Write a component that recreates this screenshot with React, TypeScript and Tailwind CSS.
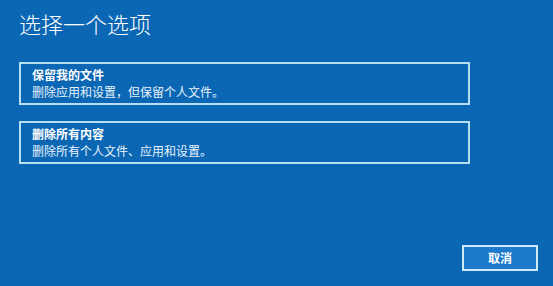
function Option({ title, desc }: { title: string; desc: string }) {
  return (
    <div className="w-[451px] h-[43px] border-2 border-[#b5e0f4] pl-[11px] flex flex-col justify-center">
      <div className="text-[12px] leading-[16px] font-bold text-white">{title}</div>
      <div className="text-[12px] leading-[17px] text-[#e8f3fb]">{desc}</div>
    </div>
  );
}

export default function App() {
  return (
    <div
      className="w-[553px] h-[286px] bg-[#0b67b4] flex flex-col overflow-hidden"
      style={{ fontFamily: '"Noto Sans CJK SC", "Noto Sans", sans-serif' }}
    >
      <div className="pl-[19px] pt-[8px]">
        <h1 className="text-[22px] leading-[30px] font-light text-white">选择一个选项</h1>
      </div>
      <div className="pl-[19px] pt-[24px] flex flex-col gap-[16px]">
        <Option title="保留我的文件" desc="删除应用和设置，但保留个人文件。" />
        <Option title="删除所有内容" desc="删除所有个人文件、应用和设置。" />
      </div>
      <div className="mt-auto flex justify-end pr-[15px] pb-[15px]">
        <button className="w-[76px] h-[26px] border-2 border-[#cdeaf8] bg-[#1c79cc] text-white text-[12px] font-bold leading-none">
          取消
        </button>
      </div>
    </div>
  );
}
